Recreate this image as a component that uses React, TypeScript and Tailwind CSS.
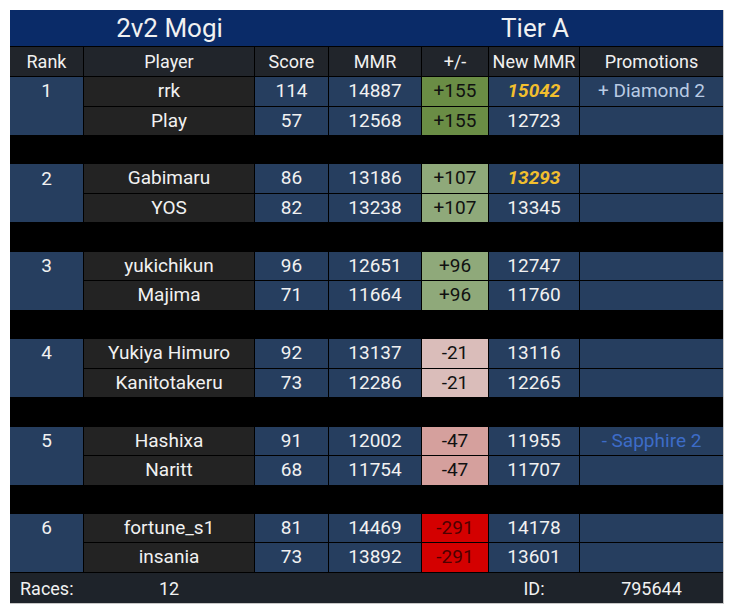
import React from "react";

type P = { name: string; score: number; mmr: number; delta: string; newMmr: number; gold?: boolean; promo?: string; promoColor?: string };
type Team = { rank: number; deltaBg: string; deltaText: string; players: P[] };

const teams: Team[] = [
  { rank: 1, deltaBg: "bg-[#6a8d45]", deltaText: "text-[#111111]", players: [
    { name: "rrk", score: 114, mmr: 14887, delta: "+155", newMmr: 15042, gold: true, promo: "+ Diamond 2", promoColor: "text-[#b9cbe4]" },
    { name: "Play", score: 57, mmr: 12568, delta: "+155", newMmr: 12723 },
  ]},
  { rank: 2, deltaBg: "bg-[#8fa97a]", deltaText: "text-[#111111]", players: [
    { name: "Gabimaru", score: 86, mmr: 13186, delta: "+107", newMmr: 13293, gold: true },
    { name: "YOS", score: 82, mmr: 13238, delta: "+107", newMmr: 13345 },
  ]},
  { rank: 3, deltaBg: "bg-[#8fa97a]", deltaText: "text-[#111111]", players: [
    { name: "yukichikun", score: 96, mmr: 12651, delta: "+96", newMmr: 12747 },
    { name: "Majima", score: 71, mmr: 11664, delta: "+96", newMmr: 11760 },
  ]},
  { rank: 4, deltaBg: "bg-[#dabdba]", deltaText: "text-[#111111]", players: [
    { name: "Yukiya Himuro", score: 92, mmr: 13137, delta: "-21", newMmr: 13116 },
    { name: "Kanitotakeru", score: 73, mmr: 12286, delta: "-21", newMmr: 12265 },
  ]},
  { rank: 5, deltaBg: "bg-[#d5a09d]", deltaText: "text-[#111111]", players: [
    { name: "Hashixa", score: 91, mmr: 12002, delta: "-47", newMmr: 11955, promo: "- Sapphire 2", promoColor: "text-[#3d6cc8]" },
    { name: "Naritt", score: 68, mmr: 11754, delta: "-47", newMmr: 11707 },
  ]},
  { rank: 6, deltaBg: "bg-[#d40000]", deltaText: "text-[#4e0000]", players: [
    { name: "fortune_s1", score: 81, mmr: 14469, delta: "-291", newMmr: 14178 },
    { name: "insania", score: 73, mmr: 13892, delta: "-291", newMmr: 13601 },
  ]},
];

const cols = "grid-cols-[73px_170px_73px_92px_66px_90px_143px]";
const blue = "bg-[#263e5f]";
const cell = "flex items-center justify-center";

export default function App() {
  const body: React.ReactNode[] = [];
  teams.forEach((t, ti) => {
    if (ti > 0) body.push(<div key={"s" + ti} className="col-span-7 bg-black" />);
    t.players.forEach((p, pi) => {
      if (pi === 0) {
        body.push(
          <div key={"r" + ti} className={`row-span-2 ${blue} grid grid-rows-2`}>
            <div className={cell}>{t.rank}</div>
            <div />
          </div>
        );
      }
      body.push(<div key={`n${ti}${pi}`} className={`${cell} bg-[#232323]`}>{p.name}</div>);
      body.push(<div key={`sc${ti}${pi}`} className={`${cell} ${blue}`}>{p.score}</div>);
      body.push(<div key={`m${ti}${pi}`} className={`${cell} ${blue}`}>{p.mmr}</div>);
      body.push(<div key={`d${ti}${pi}`} className={`${cell} ${t.deltaBg} ${t.deltaText}`}>{p.delta}</div>);
      body.push(
        <div key={`nm${ti}${pi}`} className={`${cell} ${blue} ${p.gold ? "text-[#f2bf2e] font-bold italic" : ""}`}>{p.newMmr}</div>
      );
      body.push(<div key={`p${ti}${pi}`} className={`${cell} ${blue} ${p.promoColor ?? ""}`}>{p.promo ?? ""}</div>);
    });
  });

  return (
    <div className="w-[733px] h-[611px] bg-white pt-[10px] pl-[10px]" style={{ fontFamily: "Roboto, 'Noto Sans', sans-serif" }}>
      <div className="w-[714px] flex flex-col text-[#f1f1f1] text-[19px] border-r border-b border-[#c8c8c8]">
        <div className="h-[36px] bg-[#0a2b68] flex text-[26px]">
          <div className="w-[319px] flex items-center justify-center">2v2 Mogi</div>
          <div className="flex-1 flex items-center justify-center pl-[18px]">Tier A</div>
        </div>
        <div className={`grid ${cols} grid-rows-[29px_repeat(17,1fr)] gap-px bg-black h-[526px] border-t border-black`}>
          {["Rank", "Player", "Score", "MMR", "+/-", "New MMR", "Promotions"].map((h) => (
            <div key={h} className={`${cell} bg-[#21252b] text-[18px]`}>{h}</div>
          ))}
          {body}
        </div>
        <div className={`grid ${cols} gap-px h-[31px] bg-[#1e232a] text-[18px] border-t border-black`}>
          <div className="flex items-center pl-[10px]">Races:</div>
          <div className={cell}>12</div>
          <div />
          <div />
          <div />
          <div className={cell}>ID:</div>
          <div className={cell}>795644</div>
        </div>
      </div>
    </div>
  );
}
